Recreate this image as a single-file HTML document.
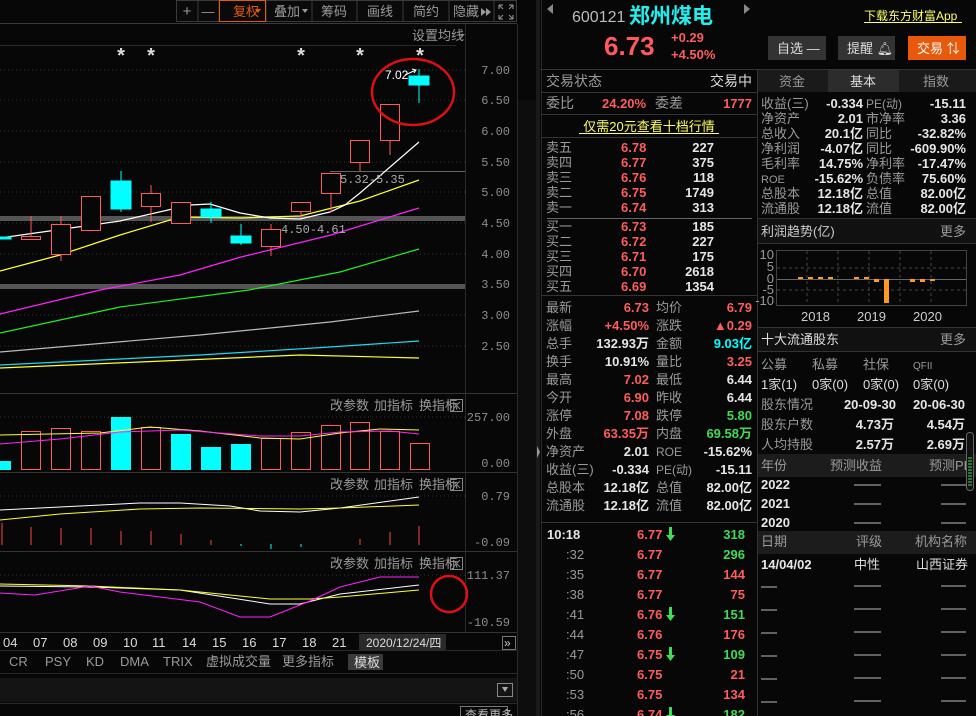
<!DOCTYPE html>
<html><head><meta charset="utf-8"><style>
html,body{margin:0;padding:0;background:#070707;}
svg{display:block}
text{font-family:"Liberation Sans","Noto Sans CJK SC",sans-serif;font-size:13px}
.l{fill:#9a9a9a}.w{fill:#e6e6e6;font-weight:bold}.r{fill:#ff5c5c;font-weight:bold}.gr{fill:#3fdc55;font-weight:bold}.c{fill:#00ffff;font-weight:bold}
.ax{fill:#8c8c8c;font-family:"Liberation Mono",monospace;font-size:12px}
.e{text-anchor:end}.m{text-anchor:middle}
.sm{font-size:12px}
</style></head><body>
<svg width="976" height="716" viewBox="0 0 976 716" xmlns="http://www.w3.org/2000/svg">
<rect width="976" height="716" fill="#070707"/>
<!-- toolbar -->
<g stroke="#3a3a3a" fill="#0a0a0a">
<rect x="176.5" y="0.5" width="340" height="21"/>
</g>
<g stroke="#3a3a3a"><line x1="198" y1="0" x2="198" y2="22"/><line x1="219" y1="0" x2="219" y2="22"/><line x1="266" y1="0" x2="266" y2="22"/><line x1="312" y1="0" x2="312" y2="22"/><line x1="357" y1="0" x2="357" y2="22"/><line x1="403" y1="0" x2="403" y2="22"/><line x1="449" y1="0" x2="449" y2="22"/><line x1="494" y1="0" x2="494" y2="22"/><line x1="0" y1="23.5" x2="517" y2="23.5"/></g>
<rect x="219.5" y="0.5" width="46" height="21" fill="none" stroke="#e8590c"/>
<text x="187" y="16" class="l m" style="font-size:15px">+</text><text x="208" y="16" class="l m" style="font-size:13px">—</text>
<text x="233" y="16" fill="#e8590c">复权</text><path d="M255 9h6l-3 4z" fill="#e8590c"/>
<text x="274" y="16" class="l">叠加</text><path d="M302 9h6l-3 4z" fill="#999"/>
<text x="321" y="16" class="l">筹码</text><text x="367" y="16" class="l">画线</text><text x="413" y="16" class="l">简约</text><text x="453" y="16" class="l">隐藏</text><path d="M481 8l5 4-5 4zM486 8l5 4-5 4z" fill="#999"/>
<g stroke="#999" fill="none"><path d="M499 5l4 4M499 5v4M499 5h4M513 5l-4 4M513 5v4M513 5h-4M499 19l4-4M499 19v-4M499 19h4M513 19l-4-4M513 19v-4M513 19h-4"/></g>
<text x="412" y="40" class="l">设置均线</text><path d="M459 34h6l-3 3z" fill="#888"/>
<line x1="0" y1="45.5" x2="456" y2="45.5" stroke="#2a2a2a"/>
<line x1="465.5" y1="24" x2="465.5" y2="632" stroke="#2a2a2a"/>
<line x1="517.5" y1="24" x2="517.5" y2="716" stroke="#2a2a2a"/>
<rect x="518" y="100" width="18" height="616" fill="#0d0d0d"/><rect x="536" y="0" width="4" height="716" fill="#1a1a1a"/>
<path d="M537 446l3 6-3 6z" fill="#999"/>
<!-- stars -->
<g fill="#ddd" style="font-size:20px;font-weight:bold"><text x="121" y="62" class="m" style="font-size:20px">*</text><text x="151" y="62" class="m" style="font-size:20px">*</text><text x="301" y="62" class="m" style="font-size:20px">*</text><text x="360" y="62" class="m" style="font-size:20px">*</text><text x="420" y="62" class="m" style="font-size:20px">*</text></g>
<!-- grid -->
<g stroke="#333" stroke-dasharray="1,3">
<line x1="0" y1="70" x2="465" y2="70"/><line x1="0" y1="100" x2="465" y2="100"/><line x1="0" y1="131" x2="465" y2="131"/><line x1="0" y1="162" x2="465" y2="162"/><line x1="0" y1="192" x2="465" y2="192"/><line x1="0" y1="223" x2="465" y2="223"/><line x1="0" y1="254" x2="465" y2="254"/><line x1="0" y1="315" x2="465" y2="315"/><line x1="0" y1="346" x2="465" y2="346"/>
<line x1="0" y1="417" x2="465" y2="417"/><line x1="0" y1="496" x2="465" y2="496"/><line x1="0" y1="575" x2="465" y2="575"/>
</g>
<g class="ax"><text x="510" y="74" class="ax e">7.00</text><text x="510" y="104" class="ax e">6.50</text><text x="510" y="135" class="ax e">6.00</text><text x="510" y="166" class="ax e">5.50</text><text x="510" y="196" class="ax e">5.00</text><text x="510" y="227" class="ax e">4.50</text><text x="510" y="258" class="ax e">4.00</text><text x="510" y="288" class="ax e">3.50</text><text x="510" y="319" class="ax e">3.00</text><text x="510" y="350" class="ax e">2.50</text>
<text x="510" y="421" class="ax e">257.00</text><text x="510" y="467" class="ax e">0.00</text><text x="510" y="500" class="ax e">0.79</text><text x="510" y="546" class="ax e">-0.09</text><text x="510" y="579" class="ax e">111.37</text><text x="510" y="626" class="ax e">-10.59</text></g>
<rect x="0" y="216" width="465" height="5" fill="#555"/><rect x="0" y="284" width="465" height="5" fill="#555"/>
<line x1="330" y1="171.5" x2="465" y2="171.5" stroke="#666"/>
<!-- MAs -->
<g fill="none" stroke-width="1.2">
<polyline stroke="#ffff33" points="0,368 140,362 300,355 419,358"/>
<polyline stroke="#22d8ee" points="0,365 200,355 330,347 419,341"/>
<polyline stroke="#bbb" points="0,352 200,335 330,322 419,311"/>
<polyline stroke="#22ee22" points="0,333 120,307 249,290 340,272 419,249"/>
<polyline stroke="#ff22ff" points="0,314 100,290 180,275 241,257 331,235 419,208"/>
<polyline stroke="#ffff33" points="0,271 60,255 120,235 180,217 240,218 300,216 360,201 419,180"/>
<polyline stroke="#fff" points="0,238 120,221 190,205 210,204 240,213 270,218 300,219 330,212 345,205 360,193 419,142"/>
</g>
<!-- candles -->
<g stroke="#ff5a5a" fill="#070707">
<line x1="31" y1="216" x2="31" y2="236"/><rect x="21.5" y="236.5" width="19" height="3"/>
<line x1="61" y1="216" x2="61" y2="261"/><rect x="51.5" y="224.5" width="19" height="30"/>
<rect x="81.5" y="196.5" width="19" height="34"/>
<line x1="151" y1="185" x2="151" y2="222"/><rect x="141.5" y="193.5" width="19" height="13"/>
<rect x="171.5" y="202.5" width="19" height="21"/>
<line x1="271" y1="224" x2="271" y2="256"/><rect x="261.5" y="229.5" width="19" height="17"/>
<line x1="301" y1="211" x2="301" y2="218"/><rect x="291.5" y="202.5" width="19" height="9"/>
<line x1="331" y1="193" x2="331" y2="212"/><rect x="321.5" y="173.5" width="19" height="20"/>
<line x1="360" y1="162" x2="360" y2="171"/><rect x="350.5" y="140.5" width="19" height="22"/>
<line x1="390" y1="140" x2="390" y2="155"/><rect x="380.5" y="104.5" width="19" height="36"/>
</g>
<g fill="#00ffff" stroke="#00ffff">
<rect x="0" y="237" width="11" height="2"/>
<line x1="121" y1="171" x2="121" y2="212"/><rect x="111" y="181" width="20" height="28"/>
<line x1="211" y1="202" x2="211" y2="223"/><rect x="201" y="209" width="20" height="8"/>
<line x1="241" y1="224" x2="241" y2="245"/><rect x="231" y="236" width="20" height="7"/>
<line x1="419" y1="69" x2="419" y2="103"/><rect x="409" y="76" width="20" height="9"/>
</g>
<text x="340" y="183" fill="#aaa" class="sm" style="font-family:'Liberation Mono',monospace">5.32-5.35</text>
<text x="281" y="233" fill="#aaa" class="sm" style="font-family:'Liberation Mono',monospace">4.50-4.61</text>
<text x="385" y="79" fill="#fff" class="sm">7.02</text>
<path d="M405 75l11-5M412 69l4 1-2 3" stroke="#fff" fill="none"/>
<ellipse cx="413" cy="92" rx="41" ry="33" fill="none" stroke="#e01010" stroke-width="2.5"/>
<!-- panel borders -->
<g stroke="#333"><line x1="0" y1="393.5" x2="517" y2="393.5"/><line x1="0" y1="472.5" x2="517" y2="472.5"/><line x1="0" y1="551.5" x2="517" y2="551.5"/><line x1="0" y1="632.5" x2="517" y2="632.5"/></g>
<g class="l"><text x="330" y="410">改参数</text><text x="374" y="410">加指标</text><text x="419" y="410">换指标</text><text x="330" y="489">改参数</text><text x="374" y="489">加指标</text><text x="419" y="489">换指标</text><text x="330" y="568">改参数</text><text x="374" y="568">加指标</text><text x="419" y="568">换指标</text></g>
<g stroke="#888" fill="none"><rect x="450.5" y="399.5" width="12" height="12"/><path d="M453 402l7 7M460 402l-7 7"/><rect x="450.5" y="478.5" width="12" height="12"/><path d="M453 481l7 7M460 481l-7 7"/><rect x="450.5" y="557.5" width="12" height="12"/><path d="M453 560l7 7M460 560l-7 7"/></g>
<!-- volume -->
<g fill="#00ffff"><rect x="0" y="461" width="11" height="9"/><rect x="111" y="417" width="20" height="53"/><rect x="171" y="434" width="20" height="36"/><rect x="201" y="447" width="20" height="23"/><rect x="231" y="444" width="20" height="26"/></g>
<g stroke="#ff5a5a" fill="none"><rect x="21.5" y="431.5" width="19" height="38"/><rect x="51.5" y="428.5" width="19" height="41"/><rect x="81.5" y="431.5" width="19" height="38"/><rect x="141.5" y="427.5" width="19" height="42"/><rect x="261.5" y="438.5" width="19" height="31"/><rect x="291.5" y="432.5" width="19" height="37"/><rect x="321.5" y="425.5" width="19" height="44"/><rect x="350.5" y="422.5" width="19" height="47"/><rect x="380.5" y="431.5" width="19" height="38"/><rect x="410.5" y="443.5" width="19" height="26"/></g>
<polyline fill="none" stroke="#ffff33" points="0,435 100,433 150,427 200,431 260,438 300,439 340,433 380,429 419,430"/>
<polyline fill="none" stroke="#ff22ff" points="0,444 60,439 120,432 180,430 260,436 300,436 340,432 390,431 419,434"/>
<!-- macd -->
<polyline fill="none" stroke="#fff" points="0,510 60,507 140,503 180,503 230,506 260,511 300,512 340,508 419,497"/>
<polyline fill="none" stroke="#ffff33" points="0,520 60,514 140,509 200,508 300,509 340,508 419,505"/>
<g stroke="#ff4444"><line x1="2" y1="523" x2="2" y2="545"/><line x1="31" y1="527" x2="31" y2="545"/><line x1="61" y1="528" x2="61" y2="545"/><line x1="91" y1="528" x2="91" y2="545"/><line x1="121" y1="531" x2="121" y2="545"/><line x1="151" y1="531" x2="151" y2="545"/><line x1="181" y1="534" x2="181" y2="545"/><line x1="211" y1="540" x2="211" y2="545"/><line x1="360" y1="539" x2="360" y2="545"/><line x1="390" y1="532" x2="390" y2="545"/><line x1="419" y1="526" x2="419" y2="545"/></g>
<g stroke="#00ffff"><line x1="241" y1="544" x2="241" y2="546"/><line x1="271" y1="544" x2="271" y2="549"/><line x1="301" y1="544" x2="301" y2="547"/></g>
<!-- kdj -->
<polyline fill="none" stroke="#fff" points="0,586 90,587 180,590 270,604 300,604 340,594 419,585"/>
<polyline fill="none" stroke="#ffff33" points="0,584 90,586 180,590 270,599 310,599 340,597 419,590"/>
<polyline fill="none" stroke="#ff22ff" points="0,593 35,595 90,586 120,592 200,602 240,617 270,617 310,601 340,587 380,577 419,577"/>
<circle cx="449" cy="594" r="18" fill="none" stroke="#e01010" stroke-width="2.5"/>
<!-- dates -->
<g fill="#ddd"><text x="3" y="647">04</text><text x="33" y="647">07</text><text x="63" y="647">08</text><text x="93" y="647">09</text><text x="123" y="647">10</text><text x="152" y="647">11</text><text x="182" y="647">14</text><text x="212" y="647">15</text><text x="242" y="647">16</text><text x="272" y="647">17</text><text x="302" y="647">18</text><text x="332" y="647">21</text></g>
<rect x="359" y="634" width="87" height="16" fill="#2a2a2a"/><text x="366" y="647" fill="#ddd" class="sm">2020/12/24/四</text>
<rect x="502.5" y="636.5" width="13" height="13" fill="none" stroke="#777"/><text x="504" y="647" fill="#ccc" class="sm">»</text>
<line x1="0" y1="650.5" x2="517" y2="650.5" stroke="#2a2a2a"/>
<g class="l"><text x="9" y="666">CR</text><text x="45" y="666">PSY</text><text x="86" y="666">KD</text><text x="120" y="666">DMA</text><text x="163" y="666">TRIX</text><text x="206" y="666">虚拟成交量</text><text x="282" y="666">更多指标</text></g>
<rect x="348" y="654" width="35" height="16" fill="#3a3a3a"/><text x="354" y="667" fill="#ddd">模板</text>
<line x1="0" y1="673.5" x2="517" y2="673.5" stroke="#2a2a2a"/>
<rect x="0" y="678" width="517" height="24" fill="#141414"/>
<rect x="497.5" y="683.5" width="15" height="13" fill="none" stroke="#888"/><path d="M502 687h6l-3 5z" fill="#aaa"/>
<line x1="0" y1="703.5" x2="517" y2="703.5" stroke="#2a2a2a"/>
<rect x="460.5" y="706.5" width="47" height="12" fill="none" stroke="#777"/><text x="465" y="719" fill="#bbb" class="sm">查看更多</text>

<!-- RIGHT HEADER -->
<path d="M547 9l6-5v10z" fill="#888"/>
<text x="572" y="22" fill="#bbb" style="font-size:16px">600121</text>
<text x="629" y="23" fill="#22eeee" style="font-size:21px;font-weight:bold">郑州煤电</text>
<path d="M744 4l6 5-6 5z" fill="#888"/>
<text x="864" y="20" fill="#ffff66" class="sm">下载东方财富App</text><line x1="864" y1="22.5" x2="962" y2="22.5" stroke="#ffff66"/>
<text x="604" y="55" fill="#ff5a5a" style="font-size:26px;font-weight:bold">6.73</text>
<text x="671" y="42" class="r">+0.29</text><text x="671" y="59" class="r">+4.50%</text>
<rect x="768" y="36" width="58" height="24" fill="#333"/><text x="777" y="53" fill="#ddd">自选 —</text>
<rect x="838" y="36" width="57" height="24" fill="#333"/><text x="847" y="53" fill="#ddd">提醒 🔔︎</text>
<rect x="908" y="36" width="58" height="24" fill="#e8590c"/><text x="917" y="53" fill="#fff">交易 ⇅</text>
<line x1="540" y1="69.5" x2="976" y2="69.5" stroke="#333"/>
<line x1="757.5" y1="70" x2="757.5" y2="716" stroke="#333"/>
<line x1="541.5" y1="0" x2="541.5" y2="716" stroke="#2a2a2a"/>
<!-- order book -->
<text x="546" y="86" class="l" style="font-size:14px">交易状态</text><text x="752" y="86" fill="#ddd" class="e" style="font-size:14px">交易中</text>
<line x1="541" y1="92.5" x2="757" y2="92.5" stroke="#333"/>
<text x="546" y="108" class="l" style="font-size:14px">委比</text><text x="602" y="108" class="r">24.20%</text><text x="655" y="108" class="l" style="font-size:14px">委差</text><text x="752" y="108" class="r e">1777</text>
<line x1="541" y1="114.5" x2="757" y2="114.5" stroke="#333"/>
<text x="649" y="131" fill="#ffff66" class="m">仅需20元查看十档行情</text><line x1="579" y1="133.5" x2="719" y2="133.5" stroke="#ffff66"/>
<line x1="541" y1="137.5" x2="757" y2="137.5" stroke="#333"/>
<g class="l" style="font-size:14px"><text x="546" y="152">卖五</text><text x="546" y="167">卖四</text><text x="546" y="182">卖三</text><text x="546" y="197">卖二</text><text x="546" y="212">卖一</text><text x="546" y="231">买一</text><text x="546" y="246">买二</text><text x="546" y="261">买三</text><text x="546" y="276">买四</text><text x="546" y="291">买五</text></g>
<g class="r"><text x="621" y="152">6.78</text><text x="621" y="167">6.77</text><text x="621" y="182">6.76</text><text x="621" y="197">6.75</text><text x="621" y="212">6.74</text><text x="621" y="231">6.73</text><text x="621" y="246">6.72</text><text x="621" y="261">6.71</text><text x="621" y="276">6.70</text><text x="621" y="291">6.69</text></g>
<g class="w e"><text x="714" y="152" class="w e">227</text><text x="714" y="167" class="w e">375</text><text x="714" y="182" class="w e">118</text><text x="714" y="197" class="w e">1749</text><text x="714" y="212" class="w e">313</text><text x="714" y="231" class="w e">185</text><text x="714" y="246" class="w e">227</text><text x="714" y="261" class="w e">175</text><text x="714" y="276" class="w e">2618</text><text x="714" y="291" class="w e">1354</text></g>
<line x1="547" y1="218.5" x2="752" y2="218.5" stroke="#666"/>
<line x1="541" y1="295.5" x2="757" y2="295.5" stroke="#333"/>
<!-- stats -->
<g class="l" style="font-size:14px"><text x="546" y="312">最新</text><text x="546" y="330">涨幅</text><text x="546" y="348">总手</text><text x="546" y="366">换手</text><text x="546" y="384">最高</text><text x="546" y="402">今开</text><text x="546" y="420">涨停</text><text x="546" y="438">外盘</text><text x="546" y="456">净资产</text><text x="546" y="474">收益(三)</text><text x="546" y="492">总股本</text><text x="546" y="510">流通股</text>
<text x="656" y="312">均价</text><text x="656" y="330">涨跌</text><text x="656" y="348">金额</text><text x="656" y="366">量比</text><text x="656" y="384">最低</text><text x="656" y="402">昨收</text><text x="656" y="420">跌停</text><text x="656" y="438">内盘</text><text x="656" y="456" style="font-size:12px">ROE</text><text x="656" y="474" style="font-size:12px">PE(动)</text><text x="656" y="492">总值</text><text x="656" y="510">流值</text></g>
<text x="649" y="312" class="r e">6.73</text><text x="649" y="330" class="r e">+4.50%</text><text x="649" y="348" class="w e">132.93万</text><text x="649" y="366" class="w e">10.91%</text><text x="649" y="384" class="r e">7.02</text><text x="649" y="402" class="r e">6.90</text><text x="649" y="420" class="r e">7.08</text><text x="649" y="438" class="r e">63.35万</text><text x="649" y="456" class="w e">2.01</text><text x="649" y="474" class="w e">-0.334</text><text x="649" y="492" class="w e">12.18亿</text><text x="649" y="510" class="w e">12.18亿</text>
<text x="752" y="312" class="r e">6.79</text><text x="752" y="330" class="r e">▲0.29</text><text x="752" y="348" class="c e">9.03亿</text><text x="752" y="366" class="r e">3.25</text><text x="752" y="384" class="w e">6.44</text><text x="752" y="402" class="w e">6.44</text><text x="752" y="420" class="gr e">5.80</text><text x="752" y="438" class="gr e">69.58万</text><text x="752" y="456" class="w e">-15.62%</text><text x="752" y="474" class="w e">-15.11</text><text x="752" y="492" class="w e">82.00亿</text><text x="752" y="510" class="w e">82.00亿</text>
<line x1="541" y1="522.5" x2="757" y2="522.5" stroke="#333"/>
<!-- ticks -->
<text x="547" y="539" class="w">10:18</text>
<g class="l sm"><text x="566" y="559">:32</text><text x="566" y="579">:35</text><text x="566" y="599">:38</text><text x="566" y="619">:41</text><text x="566" y="639">:44</text><text x="566" y="659">:47</text><text x="566" y="679">:50</text><text x="566" y="699">:53</text><text x="566" y="719">:56</text></g>
<g class="r"><text x="637" y="539">6.77</text><text x="637" y="559">6.77</text><text x="637" y="579">6.77</text><text x="637" y="599">6.77</text><text x="637" y="619">6.76</text><text x="637" y="639">6.76</text><text x="637" y="659">6.75</text><text x="637" y="679">6.75</text><text x="637" y="699">6.75</text><text x="637" y="719">6.74</text></g>
<g fill="#3fdc55"><path d="M669 527h3v8h3l-4.5 6-4.5-6h3z"/><path d="M669 607h3v8h3l-4.5 6-4.5-6h3z"/><path d="M669 647h3v8h3l-4.5 6-4.5-6h3z"/><path d="M669 707h3v8h3l-4.5 6-4.5-6h3z"/></g>
<text x="745" y="539" class="gr e">318</text><text x="745" y="559" class="gr e">296</text><text x="745" y="579" class="r e">144</text><text x="745" y="599" class="r e">75</text><text x="745" y="619" class="gr e">151</text><text x="745" y="639" class="r e">176</text><text x="745" y="659" class="gr e">109</text><text x="745" y="679" class="r e">21</text><text x="745" y="699" class="r e">134</text><text x="745" y="719" class="gr e">182</text>
<!-- right tabs -->
<rect x="758" y="70" width="218" height="22" fill="#1a1a1a"/><rect x="828" y="70" width="71" height="22" fill="#2c2c2c"/>
<text x="792" y="86" class="l m">资金</text><text x="863" y="86" fill="#ddd" class="m">基本</text><text x="936" y="86" class="l m">指数</text>
<g class="l"><text x="761" y="108">收益(三)</text><text x="761" y="123">净资产</text><text x="761" y="138">总收入</text><text x="761" y="153">净利润</text><text x="761" y="168">毛利率</text><text x="761" y="183" style="font-size:11px">ROE</text><text x="761" y="198">总股本</text><text x="761" y="213">流通股</text>
<text x="866" y="108" style="font-size:12px">PE(动)</text><text x="866" y="123">市净率</text><text x="866" y="138">同比</text><text x="866" y="153">同比</text><text x="866" y="168">净利率</text><text x="866" y="183">负债率</text><text x="866" y="198">总值</text><text x="866" y="213">流值</text></g>
<g><text x="863" y="108" class="w e">-0.334</text><text x="863" y="123" class="w e">2.01</text><text x="863" y="138" class="w e">20.1亿</text><text x="863" y="153" class="w e">-4.07亿</text><text x="863" y="168" class="w e">14.75%</text><text x="863" y="183" class="w e">-15.62%</text><text x="863" y="198" class="w e">12.18亿</text><text x="863" y="213" class="w e">12.18亿</text>
<text x="966" y="108" class="w e">-15.11</text><text x="966" y="123" class="w e">3.36</text><text x="966" y="138" class="w e">-32.82%</text><text x="966" y="153" class="w e">-609.90%</text><text x="966" y="168" class="w e">-17.47%</text><text x="966" y="183" class="w e">75.60%</text><text x="966" y="198" class="w e">82.00亿</text><text x="966" y="213" class="w e">82.00亿</text></g>
<line x1="758" y1="218.5" x2="976" y2="218.5" stroke="#333"/>
<rect x="758" y="219" width="218" height="24" fill="#111"/>
<text x="761" y="236" fill="#ccc">利润趋势(亿)</text><text x="966" y="236" class="l e">更多</text>
<line x1="758" y1="243.5" x2="976" y2="243.5" stroke="#333"/>
<rect x="776.5" y="250.5" width="190" height="55" fill="none" stroke="#444"/>
<g stroke="#444" stroke-dasharray="3,3"><line x1="807" y1="251" x2="807" y2="305"/><line x1="838" y1="251" x2="838" y2="305"/><line x1="869" y1="251" x2="869" y2="305"/><line x1="900" y1="251" x2="900" y2="305"/><line x1="931" y1="251" x2="931" y2="305"/><line x1="777" y1="268" x2="966" y2="268"/><line x1="777" y1="290" x2="966" y2="290"/></g>
<line x1="777" y1="279.5" x2="966" y2="279.5" stroke="#666"/>
<g class="l sm"><text x="774" y="259" class="e">10</text><text x="774" y="271" class="e">5</text><text x="774" y="283" class="e">0</text><text x="774" y="294" class="e">-5</text><text x="774" y="305" class="e">-10</text></g>
<g fill="#ff9922"><rect x="798" y="277" width="5" height="2"/><rect x="808" y="277" width="5" height="2"/><rect x="818" y="277" width="5" height="2"/><rect x="828" y="277" width="5" height="2"/><rect x="854" y="277" width="5" height="2"/><rect x="864" y="277" width="5" height="2"/><rect x="874" y="279" width="5" height="3"/><rect x="884" y="279" width="5" height="24"/><rect x="910" y="279" width="5" height="3"/><rect x="920" y="279" width="5" height="3"/><rect x="930" y="279" width="5" height="2"/></g>
<g fill="#ccc"><text x="801" y="321">2018</text><text x="857" y="321">2019</text><text x="913" y="321">2020</text></g>
<line x1="758" y1="327.5" x2="976" y2="327.5" stroke="#333"/>
<rect x="758" y="328" width="218" height="23" fill="#111"/>
<text x="761" y="344" fill="#ddd">十大流通股东</text><text x="966" y="344" class="l e">更多</text>
<line x1="758" y1="351.5" x2="976" y2="351.5" stroke="#333"/>
<g class="l sm"><text x="761" y="369">公募</text><text x="812" y="369">私募</text><text x="863" y="369">社保</text><text x="913" y="369" style="font-size:10px">QFII</text></g>
<g fill="#ddd"><text x="761" y="389">1家(1)</text><text x="812" y="389">0家(0)</text><text x="863" y="389">0家(0)</text><text x="913" y="389">0家(0)</text></g>
<g class="l" style="font-size:14px"><text x="761" y="409">股东情况</text><text x="761" y="429">股东户数</text><text x="761" y="449">人均持股</text></g>
<text x="896" y="409" class="w e">20-09-30</text><text x="965" y="409" class="w e">20-06-30</text>
<text x="894" y="429" class="w e">4.73万</text><text x="965" y="429" class="w e">4.54万</text>
<text x="894" y="449" class="w e">2.57万</text><text x="965" y="449" class="w e">2.69万</text>
<rect x="758" y="454" width="218" height="23" fill="#1c1c1c"/>
<text x="761" y="470" class="l">年份</text><text x="830" y="470" class="l">预测收益</text><text x="929" y="470" class="l">预测PE</text>
<g class="w"><text x="761" y="489">2022</text><text x="761" y="508">2021</text><text x="761" y="527">2020</text></g>
<g stroke="#bbb"><line x1="854" y1="485" x2="881" y2="485"/><line x1="941" y1="485" x2="966" y2="485"/><line x1="854" y1="504" x2="881" y2="504"/><line x1="941" y1="504" x2="966" y2="504"/><line x1="854" y1="523" x2="881" y2="523"/><line x1="941" y1="523" x2="966" y2="523"/></g>
<rect x="758" y="531" width="218" height="23" fill="#1c1c1c"/>
<text x="761" y="546" class="l">日期</text><text x="856" y="546" class="l">评级</text><text x="967" y="546" class="l e">机构名称</text>
<text x="761" y="569" class="w">14/04/02</text><text x="854" y="569" fill="#ddd">中性</text><text x="968" y="569" fill="#ddd" class="e">山西证券</text>
<g stroke="#bbb"><line x1="761" y1="587" x2="777" y2="587"/><line x1="854" y1="586" x2="881" y2="586"/><line x1="941" y1="586" x2="966" y2="586"/>
<line x1="761" y1="610" x2="777" y2="610"/><line x1="854" y1="609" x2="881" y2="609"/><line x1="941" y1="609" x2="966" y2="609"/>
<line x1="761" y1="633" x2="777" y2="633"/><line x1="854" y1="632" x2="881" y2="632"/><line x1="941" y1="632" x2="966" y2="632"/>
<line x1="761" y1="656" x2="777" y2="656"/><line x1="854" y1="655" x2="881" y2="655"/><line x1="941" y1="655" x2="966" y2="655"/>
<line x1="761" y1="679" x2="777" y2="679"/><line x1="854" y1="678" x2="881" y2="678"/><line x1="941" y1="678" x2="966" y2="678"/>
<line x1="761" y1="702" x2="777" y2="702"/><line x1="854" y1="701" x2="881" y2="701"/><line x1="941" y1="701" x2="966" y2="701"/></g>
<rect x="966.5" y="432.5" width="7" height="58" rx="3" fill="#111" stroke="#666"/>
<g stroke="#3fdc55"><line x1="968" y1="458" x2="972" y2="458"/><line x1="968" y1="461" x2="972" y2="461"/><line x1="968" y1="464" x2="972" y2="464"/><line x1="968" y1="467" x2="972" y2="467"/><line x1="968" y1="470" x2="972" y2="470"/><line x1="968" y1="473" x2="972" y2="473"/><line x1="968" y1="476" x2="972" y2="476"/><line x1="968" y1="479" x2="972" y2="479"/><line x1="968" y1="482" x2="972" y2="482"/><line x1="968" y1="485" x2="972" y2="485"/></g>
</svg>
</body></html>
